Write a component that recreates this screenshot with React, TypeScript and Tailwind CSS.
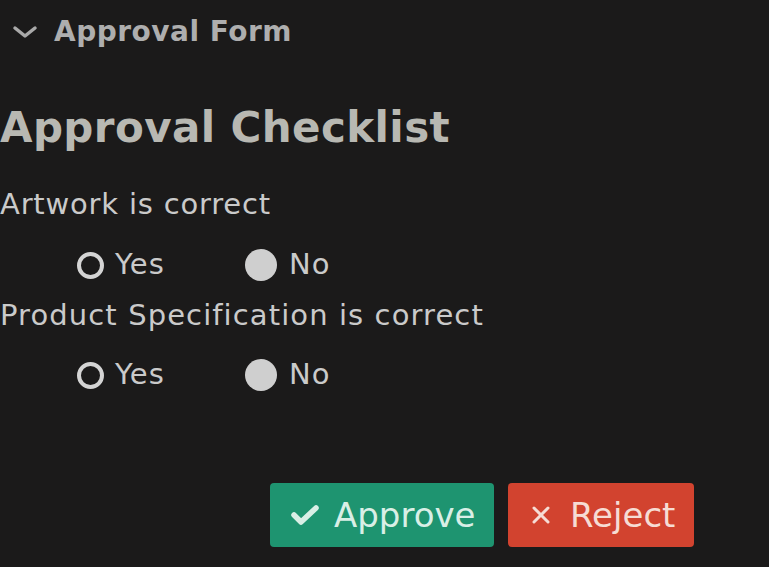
import React from "react";

function Radio({ filled }: { filled: boolean }) {
  return filled ? (
    <span className="block w-[32px] h-[32px] rounded-full bg-[#cfcfcf] shrink-0" />
  ) : (
    <span className="block w-[27px] h-[27px] rounded-full border-[4px] border-[#d4d4d4] bg-[#1b1a1a] shrink-0" />
  );
}

function RadioRow({ h, pt }: { h: string; pt: string }) {
  return (
    <div className={`flex items-center pl-[77px] ${h} ${pt}`}>
      <div className="flex items-center w-[168px] gap-[11px]">
        <Radio filled={false} />
        <span className="text-[29px] tracking-[1px] text-[#cacaca]">Yes</span>
      </div>
      <div className="flex items-center gap-[12px]">
        <Radio filled={true} />
        <span className="text-[29px] tracking-[1px] text-[#cacaca]">No</span>
      </div>
    </div>
  );
}

export default function App() {
  return (
    <div className="min-h-screen w-full bg-[#1b1a1a] font-['DejaVu_Sans',sans-serif] overflow-hidden">
      <div className="flex items-center h-[64px] pl-[12px]">
        <svg width="26" height="14" viewBox="0 0 26 14" className="shrink-0">
          <polyline points="3,3 13,11 23,3" fill="none" stroke="#a9a9a9" strokeWidth="3.5" strokeLinecap="round" strokeLinejoin="round" />
        </svg>
        <span className="ml-[16px] text-[28px] tracking-[0.5px] font-semibold text-[#aeaeae]">Approval Form</span>
      </div>
      <div className="flex items-center h-[121px] pt-[5px]">
        <h1 className="text-[42px] tracking-[0.4px] font-bold text-[#b8b8b2]">Approval Checklist</h1>
      </div>
      <div className="flex items-center h-[40px]">
        <span className="text-[29px] tracking-[0.8px] text-[#cacaca]">Artwork is correct</span>
      </div>
      <RadioRow h="h-[71px]" pt="pt-[9px]" />
      <div className="flex items-center h-[40px]">
        <span className="text-[29px] tracking-[1.1px] text-[#cacaca]">Product Specification is correct</span>
      </div>
      <RadioRow h="h-[78px]" pt="pt-0" />
      <div className="flex justify-end pr-[75px] mt-[69px] gap-[14px]">
        <button className="flex items-center h-[64px] w-[224px] rounded-[4px] bg-[#1e9470] pl-[20px] gap-[14px]">
          <svg width="30" height="22" viewBox="0 0 30 22">
            <polyline points="4,11 11,18 26,4" fill="none" stroke="#d9efe6" strokeWidth="5.5" strokeLinecap="round" strokeLinejoin="round" />
          </svg>
          <span className="text-[34px] text-[#d9efe6]">Approve</span>
        </button>
        <button className="flex items-center h-[64px] w-[186px] rounded-[4px] bg-[#d2432f] pl-[23px] gap-[19px]">
          <svg width="20" height="20" viewBox="0 0 20 20">
            <path d="M3 3 L17 17 M17 3 L3 17" stroke="#f6dcd4" strokeWidth="3" strokeLinecap="round" />
          </svg>
          <span className="text-[34px] text-[#f6dcd4]">Reject</span>
        </button>
      </div>
    </div>
  );
}
